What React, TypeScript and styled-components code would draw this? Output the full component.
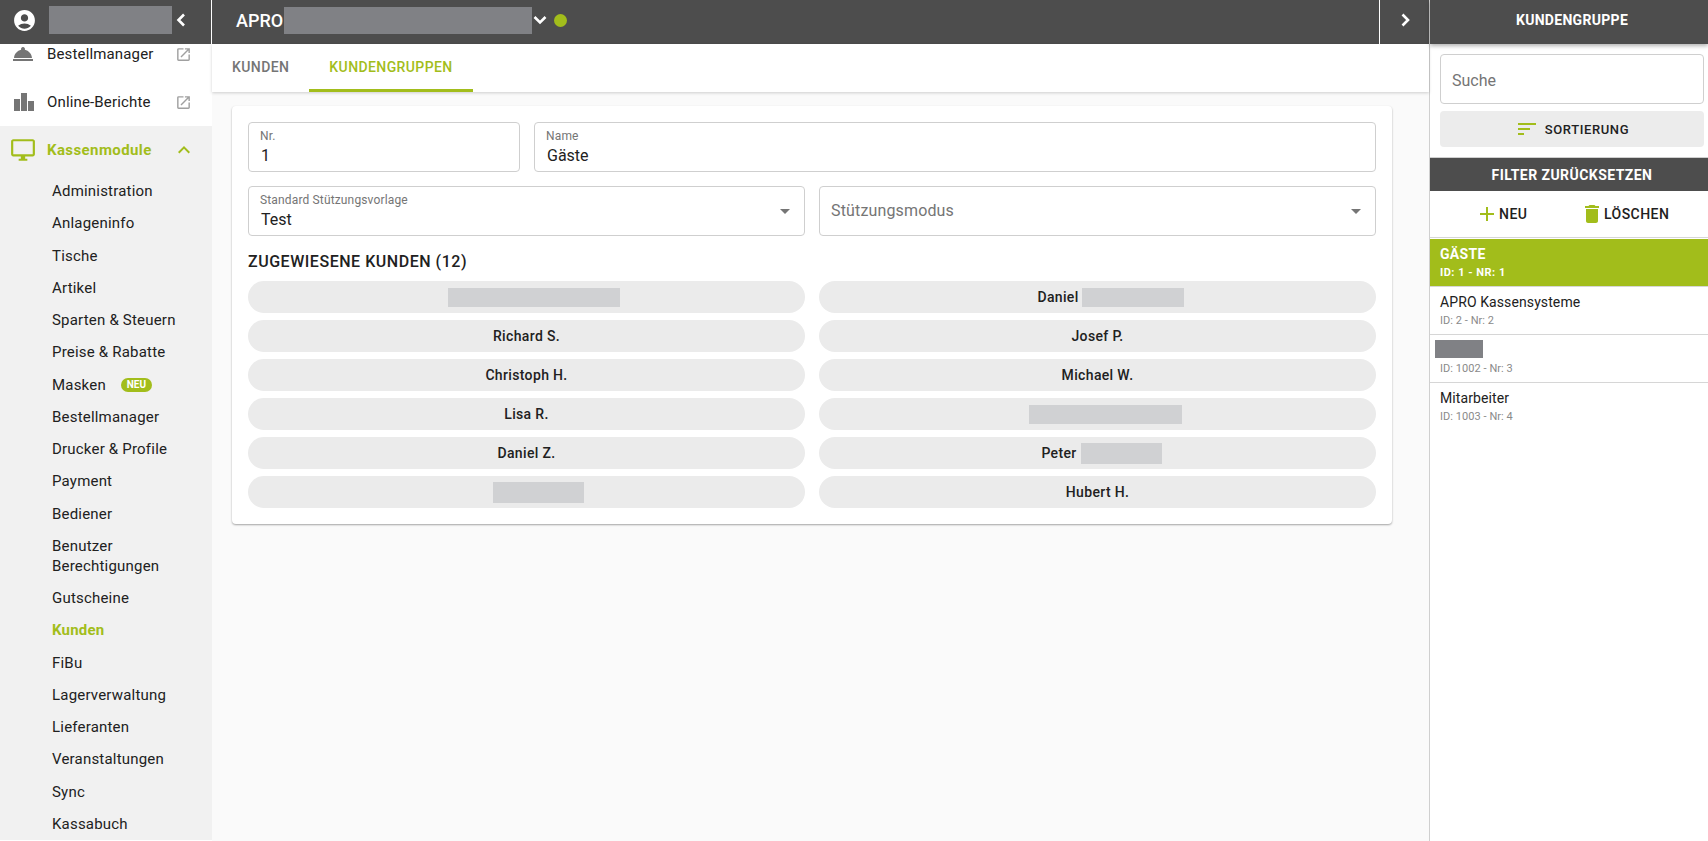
import React from "react";
import styled, { createGlobalStyle } from "styled-components";
import {
  MdAccountCircle, MdKeyboardArrowUp,
  MdOpenInNew, MdRoomService, MdOutlineDesktopWindows, MdArrowDropDown,
  MdSort, MdAdd, MdDelete,
} from "react-icons/md";

const GREEN = "#a2bd1b";
const DARK = "#4d4d4d";

const Global = createGlobalStyle`
  html, body { margin: 0; padding: 0; height: 100%; overflow: hidden; }
  body { font-family: Roboto, "Liberation Sans", sans-serif; color: #212121; background: #fafafa; }
  * { box-sizing: border-box; }
`;

const Page = styled.div`
  display: flex;
  width: 1708px;
  height: 841px;
  overflow: hidden;
`;

/* ---------- sidebar ---------- */
const Sidebar = styled.aside`
  width: 213px;
  flex: none;
  display: flex;
  flex-direction: column;
  height: 100%;
  background: #fff;
`;
const SideHeader = styled.div`
  position: relative;
  z-index: 2;
  height: 44px;
  width: 212px;
  flex: none;
  background: ${DARK};
  border-right: 1px solid #fff;
  display: flex;
  align-items: center;
  color: #fff;
  padding: 0 0 4px 12px;
`;
const Redaction = styled.span<{ $w: number; $h: number; $tone?: "dark" | "light"; $ml?: number }>`
  display: inline-block;
  flex: none;
  width: ${(p) => p.$w}px;
  height: ${(p) => p.$h}px;
  margin-left: ${(p) => p.$ml ?? 0}px;
  background: ${(p) => (p.$tone === "light" ? "#d0d1d3" : "#808185")};
  vertical-align: middle;
`;
const ChevronSvg = styled.svg<{ $ml?: number }>`
  flex: none;
  width: 24px;
  height: 24px;
  margin-left: ${(p) => p.$ml ?? 0}px;
  fill: none;
  stroke: currentColor;
  stroke-width: 2.6;
`;
const SideBody = styled.div`
  flex: 1;
  min-height: 0;
  overflow: hidden;
  border-right: 1px solid #ddd;
`;
const SideScroll = styled.nav`
  margin-top: -14px;
`;
const TopItem = styled.div<{ $active?: boolean }>`
  height: 48px;
  display: flex;
  align-items: center;
  padding: 0 20px 0 11px;
  font-size: 15px;
  letter-spacing: ${(p) => (p.$active ? "0.4px" : "0.15px")};
  color: ${(p) => (p.$active ? GREEN : "#212121")};
  font-weight: ${(p) => (p.$active ? 700 : 400)};
  svg { flex: none; }
`;
const TopIcon = styled.span`
  width: 36px;
  flex: none;
  display: flex;
  color: #757575;
`;
const TopLabel = styled.span`
  flex: 1;
`;
const Group = styled.div`
  background: #f1f1f1;
`;
const GroupIcon = styled(TopIcon)`
  color: ${GREEN};
`;
const SubList = styled.div`
  margin-top: 1px;
`;
const SubItem = styled.div<{ $active?: boolean }>`
  min-height: 32.25px;
  padding: 6px 12px 6px 52px;
  font-size: 15px;
  line-height: 20.2px;
  letter-spacing: 0.2px;
  color: ${(p) => (p.$active ? GREEN : "#212121")};
  font-weight: ${(p) => (p.$active ? 700 : 400)};
  display: flex;
  align-items: center;
`;
const Badge = styled.span`
  margin-left: 15px;
  background: ${GREEN};
  color: #fff;
  font-size: 10px;
  font-weight: 700;
  letter-spacing: 0;
  height: 14px;
  width: 31px;
  border-radius: 7px;
  display: inline-flex;
  align-items: center;
  justify-content: center;
`;

/* ---------- main ---------- */
const Main = styled.main`
  flex: 1;
  min-width: 0;
  display: flex;
  flex-direction: column;
  margin-left: -1px;
`;
const TopBar = styled.header`
  height: 44px;
  flex: none;
  background: ${DARK};
  display: flex;
  align-items: stretch;
  color: #fff;
`;
const TitleGroup = styled.div`
  flex: 1;
  display: flex;
  align-items: center;
  padding: 0 0 4px 24px;
`;
const Brand = styled.span`
  font-size: 18px;
  font-weight: 500;
`;
const StatusDot = styled.span`
  width: 13px;
  height: 13px;
  border-radius: 50%;
  background: ${GREEN};
  margin-left: 2px;
`;
const CollapseCell = styled.div`
  width: 50px;
  flex: none;
  border-left: 1px solid #fff;
  display: flex;
  align-items: center;
  justify-content: center;
  padding-bottom: 4px;
`;
const Tabs = styled.div`
  height: 48px;
  flex: none;
  background: #fff;
  display: flex;
  box-shadow: 0 1px 3px rgba(0, 0, 0, 0.18);
  position: relative;
`;
const Tab = styled.div<{ $active?: boolean }>`
  display: flex;
  align-items: center;
  justify-content: center;
  height: 48px;
  padding: 0 20px;
  font-size: 14px;
  font-weight: 500;
  letter-spacing: 0.4px;
  color: ${(p) => (p.$active ? GREEN : "#757575")};
  border-bottom: 3px solid ${(p) => (p.$active ? GREEN : "transparent")};
`;
const Content = styled.div`
  flex: 1;
  padding: 14px 37px 0 20px;
  background: #fafafa;
`;
const Card = styled.section`
  background: #fff;
  border-radius: 4px;
  box-shadow: 0 1px 2px rgba(0, 0, 0, 0.35);
  padding: 16px;
`;
const FieldRow = styled.div<{ $cols: string }>`
  display: grid;
  grid-template-columns: ${(p) => p.$cols};
  gap: 14px;
  margin-bottom: 14px;
`;
const Field = styled.div`
  position: relative;
  height: 50px;
  border: 1px solid #cfcfcf;
  border-radius: 4px;
  background: #fff;
  padding: 6px 11px 0;
  display: flex;
  flex-direction: column;
`;
const FieldLabel = styled.span`
  font-size: 12px;
  line-height: 14px;
  letter-spacing: 0.15px;
  color: #757575;
`;
const FieldValue = styled.span`
  font-size: 16px;
  line-height: 20px;
  margin-top: 3px;
  padding-left: 1px;
  color: #212121;
`;
const FieldPlaceholder = styled.span`
  font-size: 16px;
  line-height: 48px;
  margin-top: -6px;
  letter-spacing: 0.15px;
  color: #757575;
`;
const Caret = styled.span`
  position: absolute;
  right: 7px;
  top: 12px;
  display: flex;
  color: #757575;
`;
const SectionTitle = styled.h2`
  margin: 16px 0 9px;
  font-size: 16px;
  line-height: 20px;
  font-weight: 500;
  color: #212121;
  letter-spacing: 0.53px;
`;
const Chips = styled.div`
  display: grid;
  grid-template-columns: 1fr 1fr;
  column-gap: 14px;
  row-gap: 7px;
`;
const Chip = styled.div<{ $pl?: number }>`
  height: 32px;
  border-radius: 16px;
  background: #ebebeb;
  display: flex;
  align-items: center;
  justify-content: center;
  padding-left: ${(p) => p.$pl ?? 0}px;
  font-size: 14px;
  font-weight: 500;
  color: #212121;
  letter-spacing: 0.35px;
`;

/* ---------- right panel ---------- */
const Panel = styled.aside`
  width: 279px;
  flex: none;
  height: 100%;
  background: #fff;
  border-left: 1px solid #cfcfcf;
  display: flex;
  flex-direction: column;
`;
const PanelHeader = styled.div`
  height: 44px;
  flex: none;
  background: ${DARK};
  color: #fff;
  font-size: 14px;
  font-weight: 700;
  letter-spacing: 0.3px;
  display: flex;
  align-items: center;
  justify-content: center;
  padding: 0 0 4px 6px;
  box-shadow: 0 2px 4px rgba(0, 0, 0, 0.3);
  position: relative;
`;
const PanelTools = styled.div`
  padding: 10px 4px 10px 10px;
  display: flex;
  flex-direction: column;
  gap: 7px;
`;
const Search = styled.div`
  height: 50px;
  border: 1px solid #cfcfcf;
  border-radius: 4px;
  padding: 2px 11px 0;
  display: flex;
  align-items: center;
  font-size: 16px;
  color: #757575;
`;
const SortButton = styled.div`
  height: 36px;
  border-radius: 4px;
  background: #ececec;
  display: flex;
  align-items: center;
  justify-content: center;
  gap: 6px;
  font-size: 13px;
  font-weight: 500;
  letter-spacing: 0.6px;
  color: #212121;
  svg { color: ${GREEN}; }
`;
const FilterBar = styled.div`
  height: 34px;
  flex: none;
  background: ${DARK};
  border-top: 1px solid #cfcfcf;
  color: #fff;
  font-size: 14px;
  font-weight: 700;
  letter-spacing: 0.45px;
  display: flex;
  align-items: center;
  justify-content: center;
  padding-left: 6px;
`;
const Actions = styled.div`
  height: 47px;
  flex: none;
  border-bottom: 1px solid #d6d6d6;
  display: flex;
  align-items: center;
`;
const Action = styled.div<{ $w: number; $pl: number }>`
  width: ${(p) => p.$w}px;
  padding-left: ${(p) => p.$pl}px;
  display: flex;
  align-items: center;
  font-size: 14px;
  font-weight: 500;
  letter-spacing: 0.45px;
  color: #212121;
  svg { color: ${GREEN}; flex: none; }
`;
const ListItem = styled.div<{ $active?: boolean }>`
  height: 48px;
  padding: 5px 10px 0;
  border-bottom: 1px solid #d6d6d6;
  background: ${(p) => (p.$active ? GREEN : "#fff")};
  color: ${(p) => (p.$active ? "#fff" : "#212121")};
  margin-top: ${(p) => (p.$active ? "1px" : 0)};
`;
const PlainItem = styled(ListItem)`
  border-bottom: none;
`;
const ItemTitle = styled.div<{ $active?: boolean }>`
  font-size: 14px;
  line-height: 20px;
  letter-spacing: ${(p) => (p.$active ? "0.3px" : "0.1px")};
  font-weight: ${(p) => (p.$active ? 700 : 400)};
  text-transform: ${(p) => (p.$active ? "uppercase" : "none")};
`;
const ItemSub = styled.div<{ $active?: boolean }>`
  font-size: 11px;
  line-height: 15px;
  margin-top: 1px;
  letter-spacing: ${(p) => (p.$active ? "0.5px" : "0.05px")};
  font-weight: ${(p) => (p.$active ? 700 : 400)};
  color: ${(p) => (p.$active ? "#fff" : "#8a8a8a")};
  text-transform: ${(p) => (p.$active ? "uppercase" : "none")};
`;
const ItemRedaction = styled(Redaction)`
  display: block;
  margin: 0 0 3px -5px;
`;

const BarsIcon = () => (
  <svg width="20" height="18" viewBox="0 0 20 18" fill="currentColor" style={{ margin: "0 0 0 3px" }}>
    <rect x="0" y="6" width="6" height="12" />
    <rect x="7" y="0" width="6" height="18" />
    <rect x="14" y="8" width="6" height="10" />
  </svg>
);

const subItems = [
  "Administration", "Anlageninfo", "Tische", "Artikel", "Sparten & Steuern", "Preise & Rabatte",
  "Masken", "Bestellmanager", "Drucker & Profile", "Payment", "Bediener", "Benutzer Berechtigungen",
  "Gutscheine", "Kunden", "FiBu", "Lagerverwaltung", "Lieferanten", "Veranstaltungen", "Sync", "Kassabuch",
];

export default function App() {
  return (
    <Page>
      <Global />
      <Sidebar>
        <SideHeader>
          <MdAccountCircle size={25} />
          <Redaction $w={123} $h={28} $ml={12} />
          <ChevronSvg viewBox="0 0 24 24" $ml={-3}><polyline points="15,6.5 9.5,12 15,17.5" /></ChevronSvg>
        </SideHeader>
        <SideBody>
          <SideScroll>
            <TopItem>
              <TopIcon><MdRoomService size={24} /></TopIcon>
              <TopLabel>Bestellmanager</TopLabel>
              <MdOpenInNew size={17} color="#a0a0a0" />
            </TopItem>
            <TopItem>
              <TopIcon><BarsIcon /></TopIcon>
              <TopLabel>Online-Berichte</TopLabel>
              <MdOpenInNew size={17} color="#a0a0a0" />
            </TopItem>
            <Group>
              <TopItem $active>
                <GroupIcon><MdOutlineDesktopWindows size={26} style={{ marginLeft: -1 }} /></GroupIcon>
                <TopLabel>Kassenmodule</TopLabel>
                <MdKeyboardArrowUp size={24} style={{ marginRight: -4 }} />
              </TopItem>
              <SubList>
                {subItems.map((s) => (
                  <SubItem key={s} $active={s === "Kunden"}>
                    {s === "Benutzer Berechtigungen" ? (
                      <span>Benutzer<br />Berechtigungen</span>
                    ) : s}
                    {s === "Masken" && <Badge>NEU</Badge>}
                  </SubItem>
                ))}
              </SubList>
            </Group>
          </SideScroll>
        </SideBody>
      </Sidebar>

      <Main>
        <TopBar>
          <TitleGroup>
            <Brand>APRO</Brand>
            <Redaction $w={248} $h={27} $ml={1} />
            <ChevronSvg viewBox="0 0 24 24" $ml={-4}><polyline points="6.5,9 12,14.5 17.5,9" /></ChevronSvg>
            <StatusDot />
          </TitleGroup>
          <CollapseCell>
            <ChevronSvg viewBox="0 0 24 24"><polyline points="9.5,6.5 15,12 9.5,17.5" /></ChevronSvg>
          </CollapseCell>
        </TopBar>
        <Tabs>
          <Tab>KUNDEN</Tab>
          <Tab $active>KUNDENGRUPPEN</Tab>
        </Tabs>
        <Content>
          <Card>
            <FieldRow $cols="272px 1fr">
              <Field><FieldLabel>Nr.</FieldLabel><FieldValue>1</FieldValue></Field>
              <Field><FieldLabel>Name</FieldLabel><FieldValue>Gäste</FieldValue></Field>
            </FieldRow>
            <FieldRow $cols="1fr 1fr">
              <Field>
                <FieldLabel>Standard Stützungsvorlage</FieldLabel>
                <FieldValue>Test</FieldValue>
                <Caret><MdArrowDropDown size={24} /></Caret>
              </Field>
              <Field>
                <FieldPlaceholder>Stützungsmodus</FieldPlaceholder>
                <Caret><MdArrowDropDown size={24} /></Caret>
              </Field>
            </FieldRow>
            <SectionTitle>ZUGEWIESENE KUNDEN (12)</SectionTitle>
            <Chips>
              <Chip><Redaction $w={172} $h={19} $tone="light" $ml={15} /></Chip>
              <Chip $pl={26}>Daniel<Redaction $w={102} $h={19} $tone="light" $ml={3} /></Chip>
              <Chip>Richard S.</Chip>
              <Chip>Josef P.</Chip>
              <Chip>Christoph H.</Chip>
              <Chip>Michael W.</Chip>
              <Chip>Lisa R.</Chip>
              <Chip><Redaction $w={153} $h={19} $tone="light" $ml={15} /></Chip>
              <Chip>Daniel Z.</Chip>
              <Chip $pl={8}>Peter<Redaction $w={81} $h={21} $tone="light" $ml={4} /></Chip>
              <Chip><Redaction $w={91} $h={21} $tone="light" $ml={23} /></Chip>
              <Chip>Hubert H.</Chip>
            </Chips>
          </Card>
        </Content>
      </Main>

      <Panel>
        <PanelHeader>KUNDENGRUPPE</PanelHeader>
        <PanelTools>
          <Search>Suche</Search>
          <SortButton><MdSort size={24} />SORTIERUNG</SortButton>
        </PanelTools>
        <FilterBar>FILTER ZURÜCKSETZEN</FilterBar>
        <Actions>
          <Action $w={147} $pl={45}><MdAdd size={24} />NEU</Action>
          <Action $w={130} $pl={3}><MdDelete size={24} />LÖSCHEN</Action>
        </Actions>
        <ListItem $active>
          <ItemTitle $active>Gäste</ItemTitle>
          <ItemSub $active>ID: 1 - Nr: 1</ItemSub>
        </ListItem>
        <ListItem>
          <ItemTitle>APRO Kassensysteme</ItemTitle>
          <ItemSub>ID: 2 - Nr: 2</ItemSub>
        </ListItem>
        <ListItem>
          <ItemRedaction $w={48} $h={18} />
          <ItemSub>ID: 1002 - Nr: 3</ItemSub>
        </ListItem>
        <PlainItem>
          <ItemTitle>Mitarbeiter</ItemTitle>
          <ItemSub>ID: 1003 - Nr: 4</ItemSub>
        </PlainItem>
      </Panel>
    </Page>
  );
}
